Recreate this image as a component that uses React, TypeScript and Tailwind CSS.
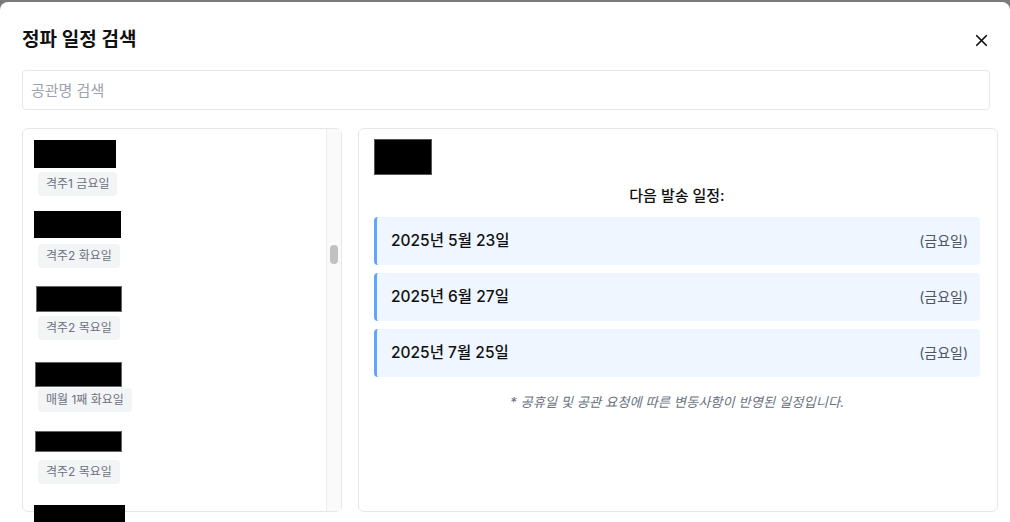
import { X } from "lucide-react";

const stations = [
  { tag: "격주1 금요일", box: "mt-0 ml-0 w-[82px] h-[28px]" },
  { tag: "격주2 화요일", box: "-mt-px ml-0 w-[87px] h-[27px]" },
  { tag: "격주2 목요일", box: "mt-[2px] ml-[2px] w-[86px] h-[26px] border border-[#666]" },
  { tag: "매월 1째 화요일", box: "mt-[6px] ml-px w-[87px] h-[25px] border border-[#666]" },
  { tag: "격주2 목요일", box: "mt-[3px] ml-px w-[87px] h-[21px] border border-[#666]" },
];

const dates = [
  { date: "2025년 5월 23일", day: "(금요일)" },
  { date: "2025년 6월 27일", day: "(금요일)" },
  { date: "2025년 7월 25일", day: "(금요일)" },
];

export default function App() {
  return (
    <div
      className="h-[522px] overflow-hidden bg-[#7a7a7a] pt-[2px]"
      style={{ fontFamily: 'Inter, "Noto Sans CJK KR", sans-serif' }}
    >
      <div className="h-full rounded-t-lg bg-white pl-[22px]">
        <div className="flex h-[68px] items-center justify-between pr-[19px] pt-[8px]">
          <h2 className="text-[19px] font-semibold text-[#111]">정파 일정 검색</h2>
          <button type="button" className="text-[#111]">
            <X size={19} strokeWidth={2.2} />
          </button>
        </div>

        <input
          type="text"
          placeholder="공관명 검색"
          className="h-10 w-[968px] rounded border border-[#e5e7eb] px-2 text-[15px] outline-none placeholder:text-[#9ca3af]"
        />

        <div className="mt-[18px] flex gap-4">
          <div className="flex h-[384px] w-[320px] rounded-md border border-[#e5e7eb]">
            <div className="flex-1 pl-[11px] pt-[11px]">
              {stations.map((s, i) => (
                <div key={i} className="flex h-[72px] flex-col">
                  <div className="h-8">
                    <div className={`bg-black ${s.box}`} />
                  </div>
                  <span className="ml-1 self-start rounded bg-[#f3f4f6] px-2 py-1 text-xs leading-4 text-[#6b7280]">
                    {s.tag}
                  </span>
                </div>
              ))}
              <div className="mt-[5px] h-[20px] w-[91px] bg-black" />
            </div>
            <div className="w-[15px] border-l border-[#ececec] bg-[#fafafa] pt-[116px]">
              <div className="ml-[3px] h-[19px] w-[8px] rounded-full bg-[#c1c1c1]" />
            </div>
          </div>

          <div className="h-[384px] w-[640px] rounded-md border border-[#e5e7eb] pl-[15px] pr-[17px] pt-[10px]">
            <div className="h-9 w-[58px] border border-[#555] bg-black" />
            <p className="mt-[10px] text-center text-[15px] font-medium text-[#111]">
              다음 발송 일정:
            </p>
            <div className="mt-[9px] flex flex-col gap-2">
              {dates.map((d) => (
                <div
                  key={d.date}
                  className="flex h-12 items-center justify-between rounded border-l-[3px] border-[#60a5fa] bg-[#eff6ff] pl-[14px] pr-3"
                >
                  <span className="text-[15.5px] font-medium text-[#111]">{d.date}</span>
                  <span className="text-[14px] text-[#4b5563]">{d.day}</span>
                </div>
              ))}
            </div>
            <p className="mt-[16px] text-center text-[13.3px] italic text-[#6b7280]">
              * 공휴일 및 공관 요청에 따른 변동사항이 반영된 일정입니다.
            </p>
          </div>
        </div>
      </div>
    </div>
  );
}
